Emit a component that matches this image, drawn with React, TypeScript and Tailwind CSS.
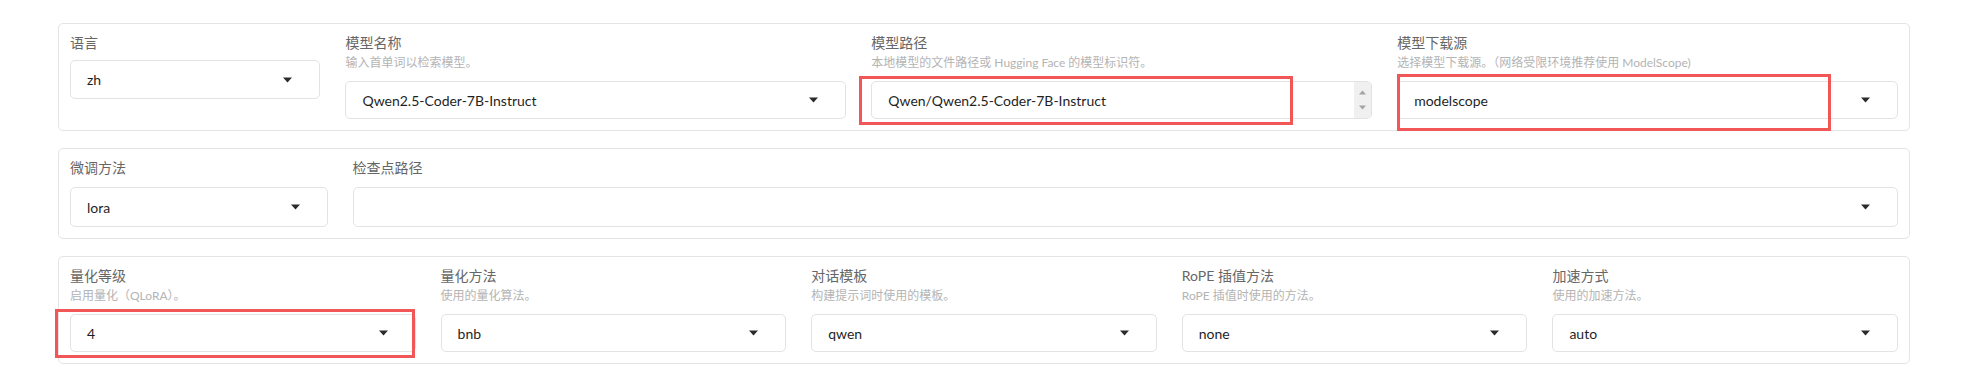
import React from 'react';

const FONT = 'font-[Lato,"Noto_Sans_CJK_SC",sans-serif]';
const BOX = 'flex items-center rounded-[5px] border border-[#e3e3e3] bg-white pl-[16px] text-[14px] text-[#1f1f1f]';

function Caret() {
  return (
    <svg width="9" height="6" viewBox="0 0 9 6" className="flex-none">
      <path d="M0 0.5h9L4.5 5.5z" fill="#2b2b2b" />
    </svg>
  );
}

function Label({ text, desc }: { text: string; desc?: string }) {
  return (
    <>
      <div className="h-5 text-[14px] leading-5 text-[#666]">{text}</div>
      {desc ? <div className="mt-[2px] h-4 whitespace-nowrap text-[12px] leading-4 text-[#b4b4b4]">{desc}</div> : null}
    </>
  );
}

function Select({ value, h = 'h-[38px]', mt }: { value: string; h?: string; mt: string }) {
  return (
    <div className={`${BOX} ${h} ${mt} justify-between pr-[27px]`}>
      <span>{value}</span>
      <Caret />
    </div>
  );
}

function Field({ label, desc, value }: { label: string; desc?: string; value: string }) {
  return (
    <div className="min-w-0">
      <Label text={label} desc={desc} />
      <Select value={value} mt={desc ? 'mt-[10px]' : 'mt-[7px]'} h={desc ? 'h-[38px]' : 'h-[39px]'} />
    </div>
  );
}

const PANEL = 'rounded-[5px] border border-[#e4e4e4] bg-white px-[11px] pt-[9px] pb-[11px]';

export default function App() {
  return (
    <div className={`relative min-h-[368px] bg-white pl-[58px] pr-[67px] pt-[23px] ${FONT}`}>
      <div className="flex flex-col gap-[17px]">
        <div className={`${PANEL} grid grid-cols-[1fr_2fr_2fr_2fr] gap-x-[25px]`}>
          <Field label="语言" value="zh" />
          <Field label="模型名称" desc="输入首单词以检索模型。" value="Qwen2.5-Coder-7B-Instruct" />
          <div className="min-w-0">
            <Label text="模型路径" desc="本地模型的文件路径或 Hugging Face 的模型标识符。" />
            <div className={`${BOX} mt-[10px] h-[38px] justify-between overflow-hidden pr-0`}>
              <span>Qwen/Qwen2.5-Coder-7B-Instruct</span>
              <div className="flex h-full w-[17px] flex-none flex-col items-center justify-between bg-[#f0f0f0] py-[8px]">
                <svg width="7" height="5" viewBox="0 0 7 5"><path d="M0 4.5h7L3.5 0.5z" fill="#a3a3a3" /></svg>
                <svg width="7" height="5" viewBox="0 0 7 5"><path d="M0 0.5h7L3.5 4.5z" fill="#a3a3a3" /></svg>
              </div>
            </div>
          </div>
          <Field label="模型下载源" desc="选择模型下载源。（网络受限环境推荐使用 ModelScope)" value="modelscope" />
        </div>

        <div className={`${PANEL} grid grid-cols-[1fr_6fr] gap-x-[25px]`}>
          <div className="min-w-0">
            <Label text="微调方法" />
            <Select value="lora" h="h-[40px]" mt="mt-[9px]" />
          </div>
          <div className="min-w-0">
            <Label text="检查点路径" />
            <Select value="" h="h-[40px]" mt="mt-[9px]" />
          </div>
        </div>

        <div className={`${PANEL} grid grid-cols-5 gap-x-[25px]`}>
          <Field label="量化等级" desc="启用量化（QLoRA）。" value="4" />
          <Field label="量化方法" desc="使用的量化算法。" value="bnb" />
          <Field label="对话模板" desc="构建提示词时使用的模板。" value="qwen" />
          <Field label="RoPE 插值方法" desc="RoPE 插值时使用的方法。" value="none" />
          <Field label="加速方式" desc="使用的加速方法。" value="auto" />
        </div>
      </div>

      {/* annotation boxes drawn over the form */}
      <div className="pointer-events-none absolute left-[859px] top-[76px] h-[49px] w-[434px] border-[3px] border-[#f25757]" />
      <div className="pointer-events-none absolute left-[1397px] top-[74px] h-[57px] w-[434px] border-[3px] border-[#f25757]" />
      <div className="pointer-events-none absolute left-[55px] top-[309px] h-[49px] w-[360px] border-[3px] border-[#f25757]" />
    </div>
  );
}
